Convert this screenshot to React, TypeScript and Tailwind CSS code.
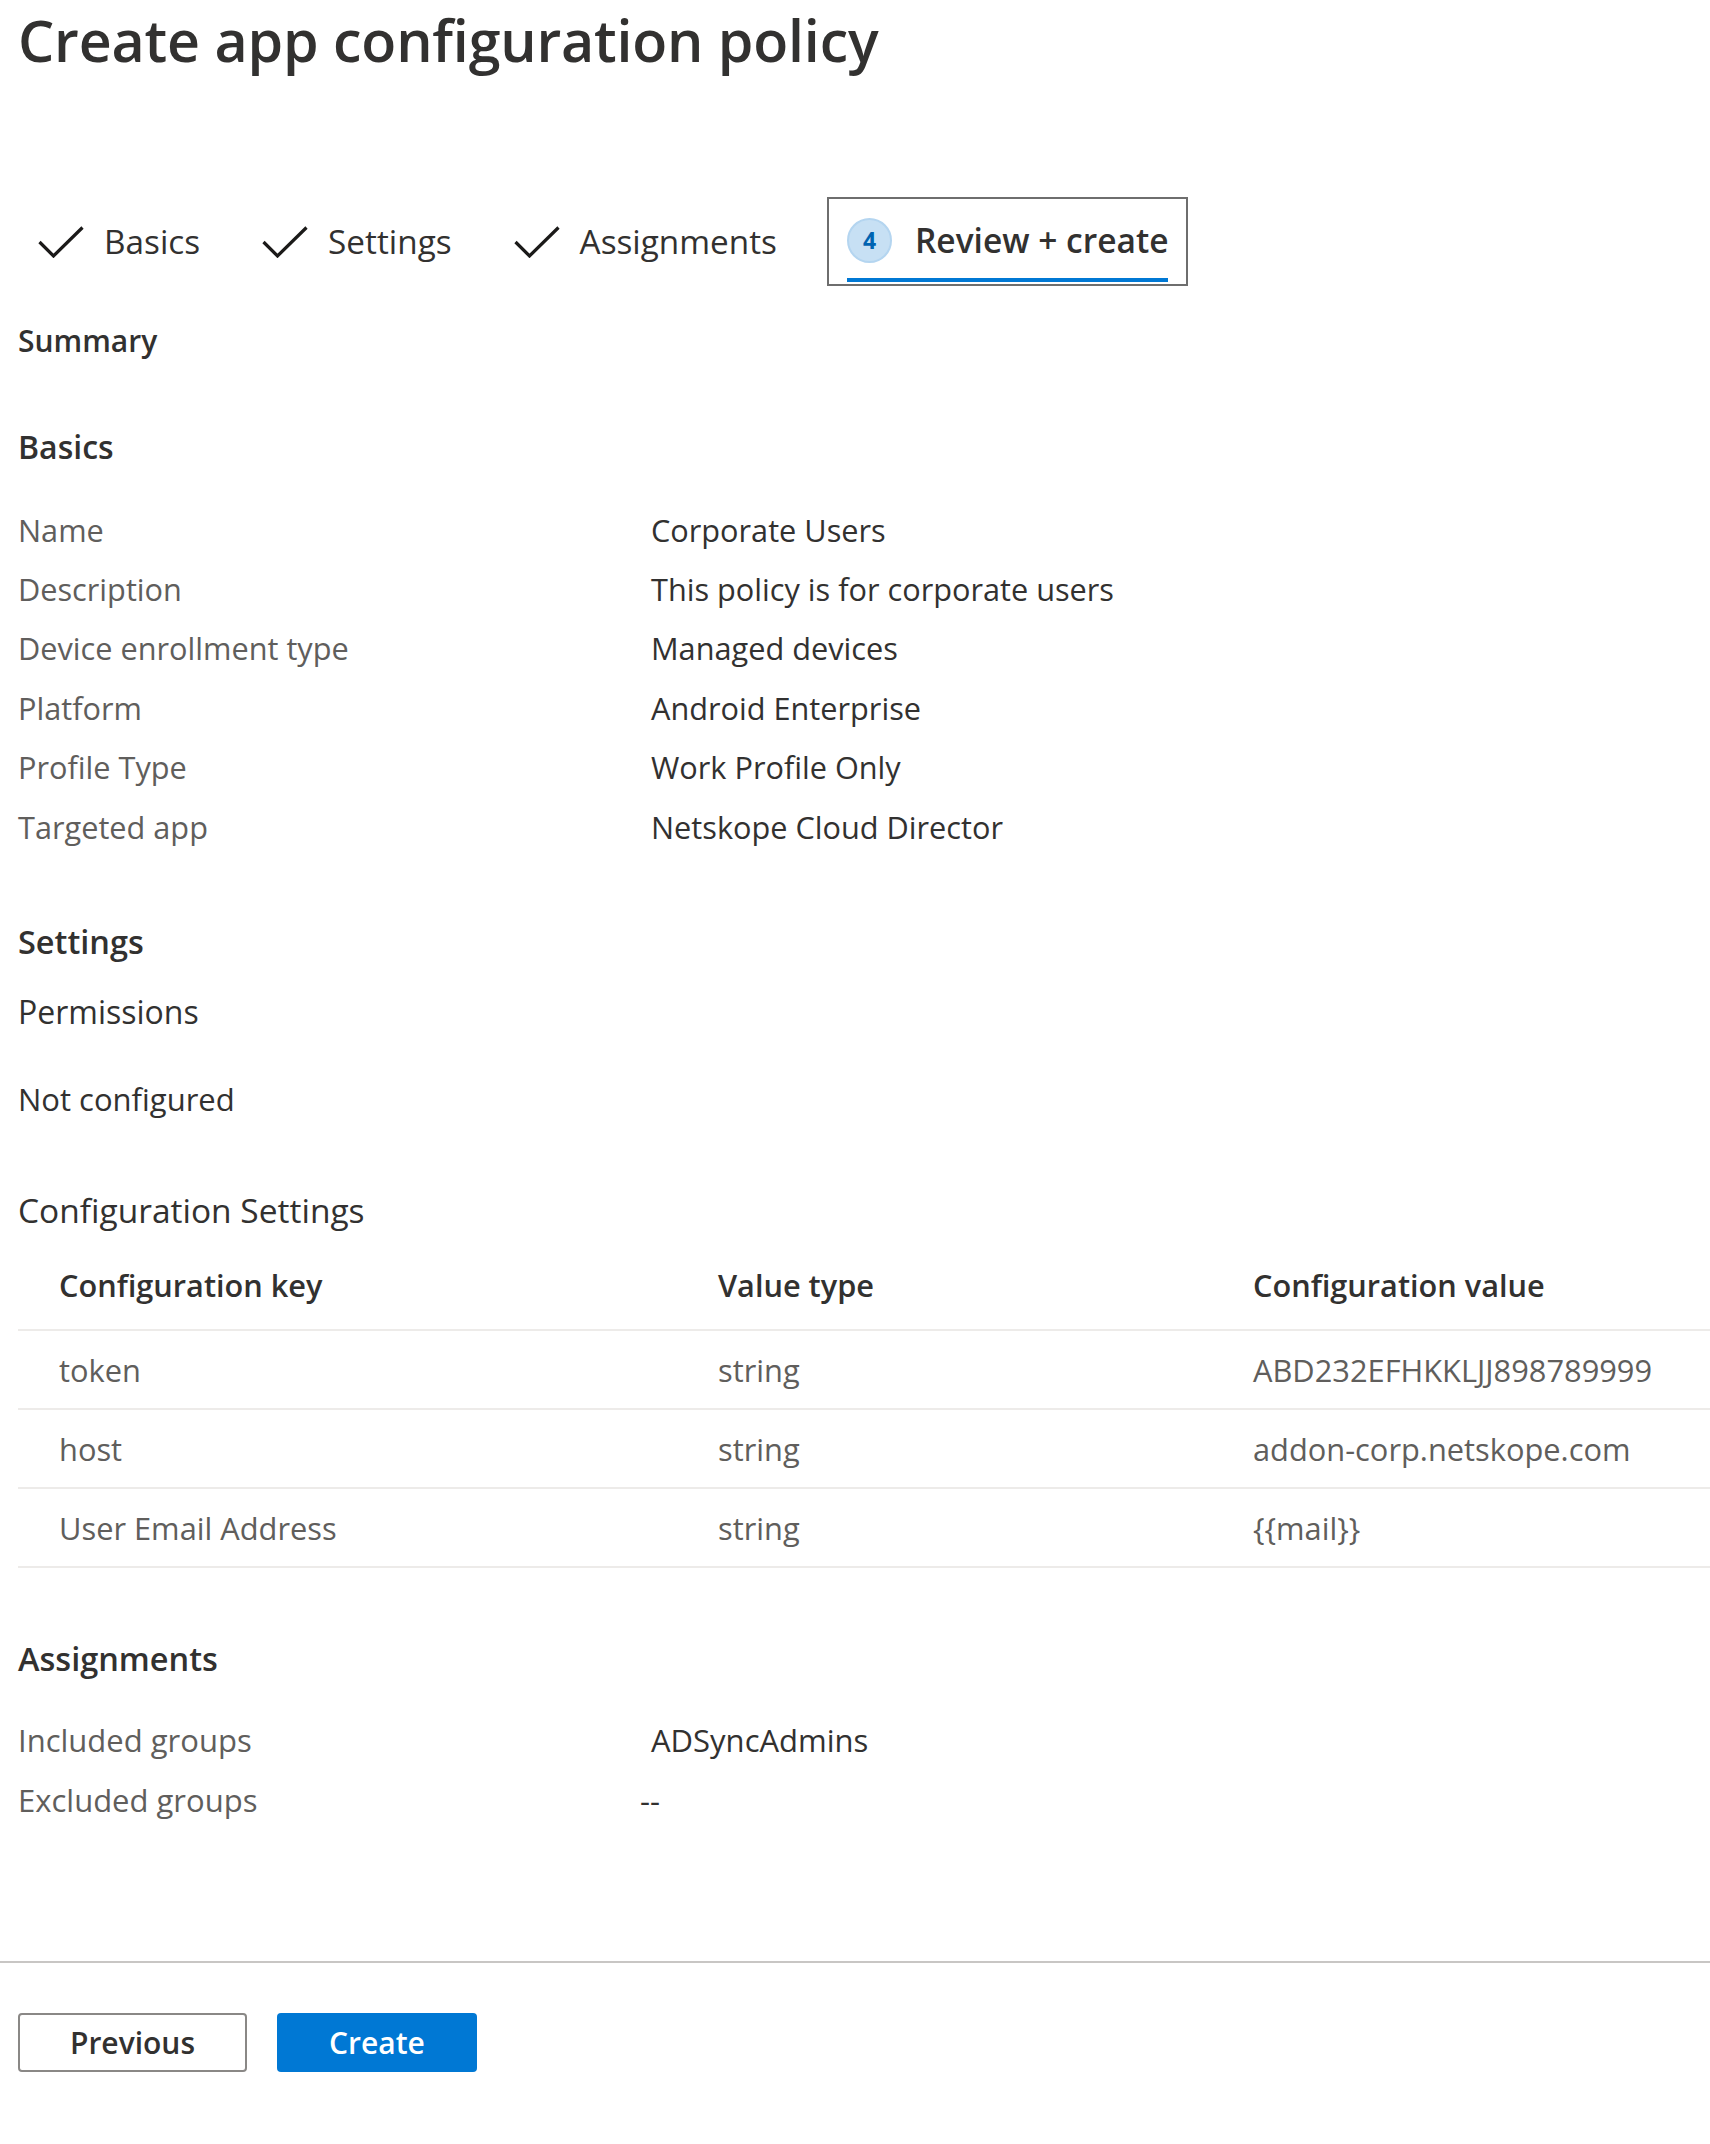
import React from "react";

const Check = () => (
  <svg width="46" height="32" viewBox="0 0 46 32" fill="none" className="shrink-0">
    <path d="M1.5 16 L15.5 30 L44.5 1.5" stroke="#1b1a19" strokeWidth="3.2" strokeLinecap="butt" strokeLinejoin="miter" />
  </svg>
);

const Tab = ({ label }: { label: string }) => (
  <div className="flex items-center gap-[20px]">
    <Check />
    <span className="text-[33.3px] text-[#323130]">{label}</span>
  </div>
);

const basics: [string, string][] = [
  ["Name", "Corporate Users"],
  ["Description", "This policy is for corporate users"],
  ["Device enrollment type", "Managed devices"],
  ["Platform", "Android Enterprise"],
  ["Profile Type", "Work Profile Only"],
  ["Targeted app", "Netskope Cloud Director"],
];

const rows: [string, string, string][] = [
  ["token", "string", "ABD232EFHKKLJJ898789999"],
  ["host", "string", "addon-corp.netskope.com"],
  ["User Email Address", "string", "{{mail}}"],
];

export default function App() {
  return (
    <div
      className="w-full min-h-[2144px] bg-white text-[#323130]"
      style={{ fontFamily: '"Open Sans", "Noto Sans", sans-serif' }}
    >
      <div className="px-[18px]">
        <div className="h-[82px] flex items-center">
          <h1 className="text-[57.3px] font-semibold leading-none tracking-[-0.2px] text-[#323130]">
            Create app configuration policy
          </h1>
        </div>

        <div className="mt-[115px] h-[89px] flex items-stretch pl-[20px]">
          <div className="flex items-center gap-[62px] pr-[50px]">
            <Tab label="Basics" />
            <Tab label="Settings" />
            <Tab label="Assignments" />
          </div>
          <div className="border-2 border-[#6e6e6e] flex flex-col px-[18px]">
            <div className="flex-1 flex items-center gap-[23px] pt-[4px]">
              <div className="w-[45px] h-[45px] rounded-full bg-[#c7e0f4] border-2 border-[#b4d5f0] flex items-center justify-center text-[23px] font-bold text-[#0063b1]">
                4
              </div>
              <span className="text-[33.5px] font-semibold text-[#323130]">Review + create</span>
            </div>
            <div className="h-[4px] bg-[#0078d4] mb-[2px]" />
          </div>
        </div>

        <div className="h-[108px] flex items-center">
          <span className="text-[30px] font-semibold">Summary</span>
        </div>
        <div className="h-[106px] flex items-center">
          <span className="text-[32px] font-semibold">Basics</span>
        </div>

        <div className="flex flex-col">
          {basics.map(([k, v]) => (
            <div key={k} className="h-[59.4px] flex items-center text-[30.7px]">
              <span className="w-[633px] text-[#605e5c]">{k}</span>
              <span className="text-[#323130]">{v}</span>
            </div>
          ))}
        </div>

        <div className="mt-[56px] h-[60px] flex items-center">
          <span className="text-[32.5px] font-semibold">Settings</span>
        </div>
        <div className="mt-[10px] h-[60px] flex items-center">
          <span className="text-[32px]">Permissions</span>
        </div>
        <div className="mt-[27px] h-[60px] flex items-center">
          <span className="text-[31px]">Not configured</span>
        </div>
        <div className="mt-[51px] h-[60px] flex items-center">
          <span className="text-[33.5px]">Configuration Settings</span>
        </div>

        <div className="flex flex-col -mr-[18px]">
          <div className="h-[91px] flex items-center border-b-2 border-[#edebe9] text-[30.7px] font-semibold">
            <span className="pl-[41px] w-[700px]">Configuration key</span>
            <span className="w-[535px]">Value type</span>
            <span>Configuration value</span>
          </div>
          {rows.map(([k, t, v]) => (
            <div key={k} className="h-[79px] flex items-center border-b-2 border-[#edebe9] text-[30.8px] text-[#605e5c]">
              <span className="pl-[41px] w-[700px]">{k}</span>
              <span className="w-[535px]">{t}</span>
              <span>{v}</span>
            </div>
          ))}
        </div>

        <div className="mt-[61px] h-[60px] flex items-center">
          <span className="text-[32.5px] font-semibold">Assignments</span>
        </div>
        <div className="mt-[21px] h-[60px] flex items-center text-[31px]">
          <span className="w-[633px] text-[#605e5c]">Included groups</span>
          <span className="text-[#323130]">ADSyncAdmins</span>
        </div>
        <div className="h-[60px] flex items-center text-[31px]">
          <span className="w-[622px] text-[#605e5c]">Excluded groups</span>
          <span className="text-[#323130]">--</span>
        </div>
      </div>

      <div className="mt-[131px] h-[2px] bg-[#c8c6c4]" />

      <div className="px-[18px] mt-[50px] flex gap-[30px]">
        <button className="w-[229px] h-[59px] border-2 border-[#8a8886] rounded-[4px] bg-white text-[30px] font-semibold text-[#323130] flex items-center justify-center">
          Previous
        </button>
        <button className="w-[200px] h-[59px] rounded-[4px] bg-[#0078d4] text-[30px] font-semibold text-white flex items-center justify-center">
          Create
        </button>
      </div>
    </div>
  );
}
